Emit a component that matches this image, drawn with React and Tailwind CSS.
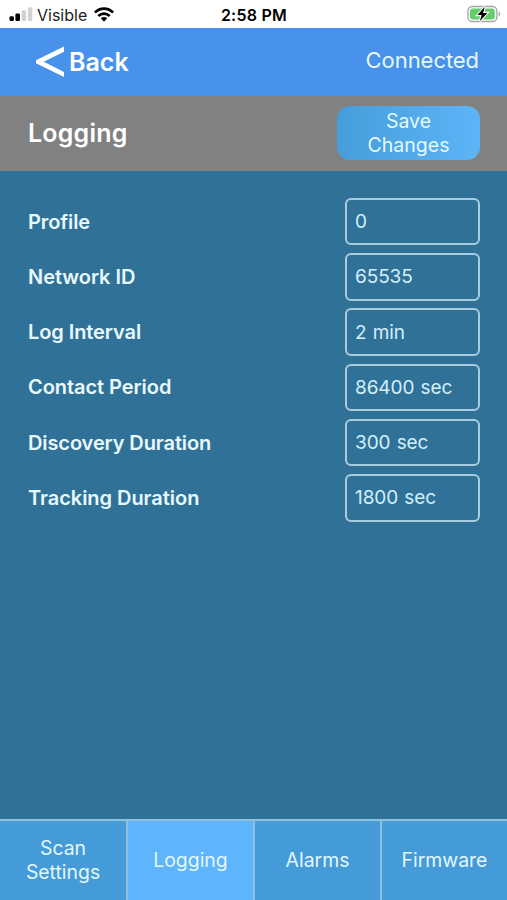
const settings = [
  { label: 'Profile', value: '0', track: 'tracking-[-0.1px]' },
  { label: 'Network ID', value: '65535', track: 'tracking-[-0.04px]' },
  { label: 'Log Interval', value: '2 min', track: 'tracking-[-0.08px]' },
  { label: 'Contact Period', value: '86400 sec', track: 'tracking-[-0.06px]' },
  { label: 'Discovery Duration', value: '300 sec', track: 'tracking-[-0.1px]' },
  { label: 'Tracking Duration', value: '1800 sec', track: 'tracking-[-0.04px]' },
];

const tabs = ['Scan Settings', 'Logging', 'Alarms', 'Firmware'];

function StatusBar() {
  return (
    <div className="flex h-7 shrink-0 items-center justify-between bg-white pl-[9px] pr-[6px] text-black">
      <div className="flex w-[160px] items-center">
        <svg width="24" height="16" viewBox="0 0 24 16" className="shrink-0">
          <rect x="0.5" y="10.2" width="4.4" height="4.8" rx="1.2" fill="#050505" />
          <rect x="6.4" y="7.6" width="4.6" height="7.4" rx="1.2" fill="#050505" />
          <rect x="12.7" y="4.2" width="4.4" height="10.8" rx="1.2" fill="#d3d3d3" />
          <rect x="18.9" y="1.2" width="4.4" height="13.8" rx="1.2" fill="#d3d3d3" />
        </svg>
        <span className="ml-[4px] mt-[2px] text-[16px] leading-5 text-[#222]">Visible</span>
        <svg width="20" height="15" viewBox="0 0 20 15" className="ml-[7px] shrink-0">
          <g fill="none" stroke="#000" strokeWidth="2.6">
            <path d="M0.9 5.5C6.1 0.3 13.9 0.3 19.1 5.5" />
            <path d="M4.3 9C7.6 5.8 12.4 5.8 15.7 9" />
          </g>
          <path d="M6.8 11.3C8.7 9.6 11.3 9.6 13.2 11.3L10 14.7Z" />
        </svg>
      </div>
      <span className="mt-[2px] text-[16px] font-semibold leading-5 tracking-[0.25px]">2:58 PM</span>
      <div className="flex w-[162px] justify-end">
        <svg width="34" height="18" viewBox="0 0 34 18">
          <rect x="0.9" y="1.5" width="29" height="15" rx="4.5" fill="#fff" stroke="#a5a5a5" strokeWidth="1.3" />
          <rect x="3" y="3.6" width="24.8" height="10.8" rx="2.8" fill="#65cc6c" />
          <path d="M31.6 6.4C33.8 7.2 33.8 10.8 31.6 11.6Z" fill="#a5a5a5" />
          <path d="M17.8 1.8L10.4 10.1H14.6L12.8 16.2L20.4 7.9H16.1Z" fill="#000" stroke="#fff" strokeWidth="2.2" paintOrder="stroke" />
        </svg>
      </div>
    </div>
  );
}

export default function App() {
  return (
    <div className="flex h-[900px] w-[507px] flex-col overflow-hidden bg-[#307297] font-['Inter','Liberation_Sans',sans-serif] text-white">
      <StatusBar />
      <header className="flex h-[67.5px] shrink-0 items-center justify-between bg-[#4892eb] pl-[36px] pr-[28px]">
        <button className="flex items-center">
          <svg width="28" height="32" viewBox="0 0 28 32">
            <path d="M28 0.5V5.7L7.8 15.8L28 25.9V31.1L0 17.3V14.3Z" fill="#fff" />
          </svg>
          <span className="ml-[5px] text-[25px] font-semibold leading-8">Back</span>
        </button>
        <span className="mb-[3px] text-[22px] leading-8 tracking-[-0.06px] text-[#e6f8ff]">Connected</span>
      </header>
      <div className="flex h-[75px] shrink-0 items-center justify-between bg-[#818181] pl-[28px] pr-[27px]">
        <h1 className="text-[25px] font-semibold leading-8 tracking-[0.2px]">Logging</h1>
        <button className="h-[54px] w-[143px] rounded-[13px] bg-linear-to-r from-[#459dd9] to-[#5db5f8] px-5 text-[19.5px] leading-6 text-[#e6f8ff]">
          Save Changes
        </button>
      </div>
      <main className="flex grow flex-col gap-[7.25px] pl-[28px] pr-[27px] pt-[27px]">
        {settings.map((s) => (
          <div key={s.label} className="flex h-12 items-center justify-between">
            <span className={`text-[20px] font-semibold leading-6 text-[#e8f8ff] ${s.track}`}>{s.label}</span>
            <div className="flex h-[47.5px] w-[135.5px] items-center rounded-[6px] border-2 border-[#a9cce0] pl-[8.5px] pt-px text-[19px] leading-6 tracking-[-0.1px] text-[#d3effc] [word-spacing:1px]">
              {s.value}
            </div>
          </div>
        ))}
      </main>
      <nav className="grid h-[81px] shrink-0 grid-cols-[128px_127px_127px_125px] border-t-2 border-[#8fc1de]">
        {tabs.map((tab) => (
          <button
            key={tab}
            className={`flex items-center justify-center border-[#8fc1de] px-5 pb-px text-center text-[19.4px] leading-6 text-[#e2f7ff] not-last:border-r-2 ${
              tab === 'Logging' ? 'bg-[#5eb5fb]' : 'bg-[#449bd8]'
            }`}
          >
            {tab}
          </button>
        ))}
      </nav>
    </div>
  );
}
